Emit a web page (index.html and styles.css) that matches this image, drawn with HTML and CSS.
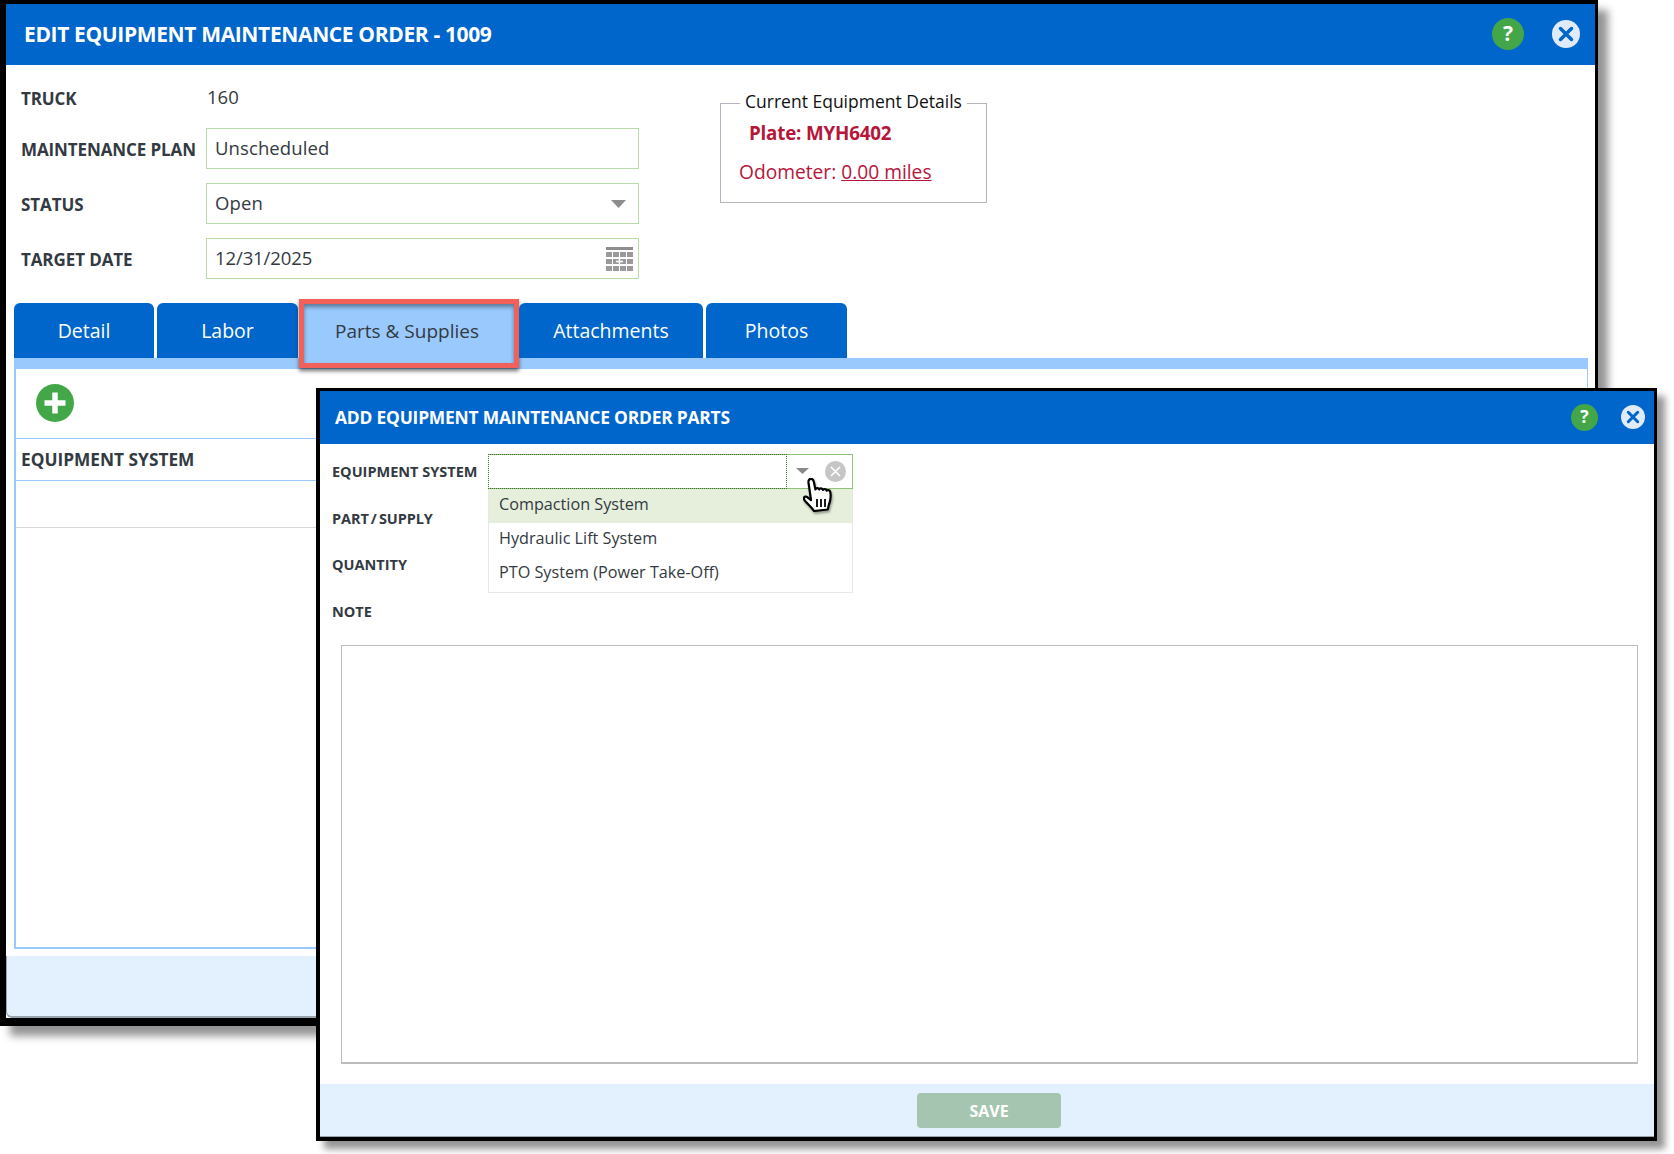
FILE: index.html
```html
<!DOCTYPE html>
<html lang="en">
<head>
<meta charset="utf-8">
<title>Edit Equipment Maintenance Order</title>
<link rel="stylesheet" href="styles.css">
</head>
<body>
<section class="window main-window">
  <header class="titlebar main-titlebar">
    <h1 class="title main-title">EDIT EQUIPMENT MAINTENANCE ORDER - 1009</h1>
    <div class="title-actions main-actions">
      <svg class="icon help-lg" viewBox="0 0 32 32"><circle cx="16" cy="16" r="16" fill="#43a648"/><text x="16" y="23" text-anchor="middle" class="help-glyph">?</text></svg>
      <svg class="icon close-lg" viewBox="0 0 28 28"><circle cx="14" cy="14" r="14" fill="#dfebfa"/><path d="M8.500 8.500l11 11M19.500 8.500l-11 11" stroke="#0066cc" stroke-width="3.500" stroke-linecap="round"/></svg>
    </div>
  </header>
  <div class="top-area">
    <div class="form-grid">
      <div class="f-label truck-label">TRUCK</div><div class="f-value">160</div>
      <div class="f-label">MAINTENANCE PLAN</div><div class="f-input">Unscheduled</div>
      <div class="f-label">STATUS</div>
      <div class="f-input">Open<svg class="status-arrow" viewBox="0 0 15 8"><path d="M0 0h15l-7.500 8z" fill="#8d8d8d"/></svg></div>
      <div class="f-label">TARGET DATE</div>
      <div class="f-input f-date">12/31/2025
        <svg class="calendar" viewBox="0 0 27 25">
          <rect width="27" height="3" fill="#8e8e8e"/>
          <g fill="#9a9a9a">
            <rect x="0" y="5" width="6" height="5"/><rect x="7" y="5" width="6" height="5"/><rect x="14" y="5" width="6" height="5"/><rect x="21" y="5" width="6" height="5"/>
            <rect x="0" y="12" width="6" height="5"/><rect x="7" y="12" width="6" height="5"/><rect x="14" y="12" width="6" height="5"/><rect x="21" y="12" width="6" height="5"/>
            <rect x="0" y="19" width="6" height="5"/><rect x="7" y="19" width="6" height="5"/><rect x="14" y="19" width="6" height="5"/><rect x="21" y="19" width="6" height="5"/>
          </g>
          <path d="M13.500 11v7M10 14.500h7" stroke="#fff" stroke-width="1.500"/>
        </svg>
      </div>
    </div>
    <fieldset class="details">
      <legend class="details-legend">Current Equipment Details</legend>
      <div class="plate">Plate: MYH6402</div>
      <div class="odometer">Odometer: <a class="odometer-link">0.00 miles</a></div>
    </fieldset>
  </div>
  <nav class="tabs">
    <div class="tab tab-detail">Detail</div>
    <div class="tab tab-labor">Labor</div>
    <div class="tab tab-parts">Parts &amp; Supplies<span class="callout"></span></div>
    <div class="tab tab-attach">Attachments</div>
    <div class="tab tab-photos">Photos</div>
  </nav>
  <div class="tab-panel">
    <div class="panel-toolbar">
      <svg class="plus" viewBox="0 0 38 38"><circle cx="19" cy="19" r="19" fill="#43a648"/><path d="M19 8.500v21M8.500 19h21" stroke="#fff" stroke-width="5.500"/></svg>
    </div>
    <div class="panel-head">EQUIPMENT SYSTEM</div>
    <div class="panel-row"></div>
  </div>
  <footer class="main-footer"></footer>
</section>

<section class="window modal-window">
  <header class="titlebar modal-titlebar">
    <h2 class="title modal-title">ADD EQUIPMENT MAINTENANCE ORDER PARTS</h2>
    <div class="title-actions modal-actions">
      <svg class="icon help-sm" viewBox="0 0 32 32"><circle cx="16" cy="16" r="16" fill="#43a648"/><text x="16" y="23" text-anchor="middle" class="help-glyph">?</text></svg>
      <svg class="icon close-sm" viewBox="0 0 28 28"><circle cx="14" cy="14" r="14" fill="#dfebfa"/><path d="M8.500 8.500l11 11M19.500 8.500l-11 11" stroke="#0066cc" stroke-width="3.500" stroke-linecap="round"/></svg>
    </div>
  </header>
  <div class="modal-body">
    <div class="modal-grid">
      <div class="m-label">EQUIPMENT SYSTEM</div>
      <div class="combo">
        <div class="combo-input"></div>
        <div class="combo-tools">
          <svg class="combo-arrow" viewBox="0 0 13 6"><path d="M0 0h13L6.500 6z" fill="#8a8a8a"/></svg>
          <svg class="combo-clear" viewBox="0 0 21 21"><circle cx="10.500" cy="10.500" r="10.500" fill="#c6c6c6"/><path d="M6 6l9 9M15 6l-9 9" stroke="#fff" stroke-width="1.600"/></svg>
        </div>
        <ul class="options">
          <li class="option option-active">Compaction System</li>
          <li class="option">Hydraulic Lift System</li>
          <li class="option">PTO System (Power Take-Off)</li>
        </ul>
        <svg class="hand" viewBox="0 0 32 34">
          <path d="M11 33c-2-3-5-6-8-9-1.500-1.500-2.500-3.500-2-4.500 .8-1.500 3-.8 4.200 .4L8 22 5.500 4.500C5.200 2 6.500 .8 8 .8s2.500 1.200 2.900 3.200l1.500 7.500c.3-1.800 3.200-2 3.800 0 .4-1.600 3.300-1.700 3.800 .4 .6-1.300 3.300-1.200 3.800 .8 .3-.8 3-1 3.500 1.300 .8 4.500 .4 8.500-1.500 13l-1 4.500z" fill="#fff" stroke="#000" stroke-width="2.200" stroke-linejoin="round"/>
          <path d="M14 21v8M18 21v8M22 21v8" stroke="#000" stroke-width="1.800"/>
        </svg>
      </div>
      <div class="m-label part-label">PART / SUPPLY</div><div></div>
      <div class="m-label">QUANTITY</div><div></div>
      <div class="m-label">NOTE</div><div></div>
    </div>
    <div class="note-box"></div>
  </div>
  <footer class="modal-footer"><button class="save">SAVE</button></footer>
</section>
</body>
</html>
```
FILE: styles.css
```css
* { box-sizing: border-box; }
html, body { margin: 0; padding: 0; background: #fff; }
body { width: 1674px; height: 1154px; position: relative; overflow: hidden; font-family: "Open Sans", "Noto Sans", sans-serif; color: #333a42; }

.window { position: absolute; display: flex; flex-direction: column; background: #fff; border-style: solid; border-color: #000; }
.main-window { left: 0; top: 0; width: 1598px; height: 1026px; border-width: 4px 3px 8px 6px; box-shadow: 10px 10px 8px rgba(0,0,0,.42); }
.modal-window { left: 316px; top: 388px; width: 1341px; height: 753px; border-width: 3px 3px 4px 4px; box-shadow: 8px 8px 7px rgba(0,0,0,.42); }

.titlebar { display: flex; align-items: center; justify-content: space-between; background: #0066cc; color: #fff; flex: none; }
.title { margin: 0; font-weight: 700; }
.main-titlebar { height: 61px; padding: 0 15px 0 18px; }
.main-title { font-size: 21px; letter-spacing: -.36px; margin-top: -2px; }
.modal-titlebar { height: 53px; padding: 0 9px 0 15px; }
.modal-title { font-size: 17.400px; letter-spacing: -.2px; margin-top: -1px; }
.title-actions { display: flex; align-items: center; margin-top: -1px; }
.main-actions { gap: 28px; }
.modal-actions { gap: 23px; }
.icon { display: block; flex: none; }
.help-lg { width: 32px; height: 32px; }
.close-lg { width: 28px; height: 28px; }
.help-sm { width: 27px; height: 27px; }
.close-sm { width: 24px; height: 24px; }
.help-glyph { font-family: "Open Sans", sans-serif; font-weight: 700; font-size: 21px; fill: #fff; }

.top-area { display: flex; align-items: flex-start; flex: none; height: 238px; padding: 12px 0 0 15px; }
.form-grid { display: grid; grid-template-columns: 185px 433px; grid-template-rows: 41px 41px 41px 41px; row-gap: 14px; width: 618px; margin-top: -4px; }
.f-label { align-self: center; font-size: 17px; font-weight: 700; letter-spacing: -.1px; padding-top: 2px; }
.truck-label { padding-top: 9px; }
.f-value { align-self: center; font-size: 18.500px; padding: 5px 0 0 1px; }
.f-input { position: relative; display: flex; align-items: center; height: 41px; padding: 0 8px 3px; border: 1px solid #b9dba6; font-size: 18.500px; letter-spacing: .1px; }
.f-date { letter-spacing: -.1px; }
.status-arrow { position: absolute; right: 12px; top: 16px; width: 15px; height: 8px; }
.calendar { position: absolute; right: 5px; top: 8px; width: 27px; height: 25px; }

.details { margin: 12px 0 0 81px; width: 267px; height: 114px; padding: 0; border: 1px solid #b4b4c0; flex: none; }
.details-legend { margin: 0 auto; padding: 0 5px 4px; font-size: 17.500px; line-height: 24px; color: #111; }
.plate { margin: 4px 0 0 28px; font-size: 18.800px; font-weight: 700; line-height: 24px; color: #b5163a; letter-spacing: -.2px; }
.odometer { margin: 15px 0 0 18px; font-size: 19.200px; line-height: 24px; color: #b5163a; }
.odometer-link { text-decoration: underline; }

.tabs { display: flex; flex: none; height: 55px; margin-left: 8px; }
.tab { position: relative; display: flex; align-items: center; justify-content: center; height: 55px; border-radius: 6px 6px 0 0; background: #0066cc; color: #fff; font-size: 19.500px; }
.tab-detail { width: 140px; }
.tab-labor { width: 141px; margin-left: 3px; }
.tab-parts { width: 216px; margin-left: 3px; padding-right: 4px; background: #99c9fd; color: #333a42; border-radius: 0; font-size: 19px; }
.tab-attach { width: 184px; margin-left: 2px; }
.tab-photos { width: 141px; margin-left: 3px; }
.callout { position: absolute; left: -2px; top: -4px; width: 220px; height: 69px; border: 5px solid #f2605a; box-shadow: 0 3px 4px rgba(0,0,0,.55), inset 0 3px 4px rgba(0,0,0,.4); }

.tab-panel { flex: none; margin: 0 7px 0 8px; height: 591px; border-style: solid; border-color: #99c9fd; border-width: 11px 1px 2px 2px; background: #fff; }
.panel-toolbar { height: 69px; display: flex; align-items: center; padding-left: 20px; }
.plus { width: 38px; height: 38px; display: block; margin-top: -1px; }
.panel-head { height: 43px; display: flex; align-items: center; padding-left: 5px; padding-bottom: 1px; border-top: 1px solid #99c9fd; border-bottom: 1px solid #99c9fd; font-size: 17.300px; font-weight: 700; }
.panel-row { height: 47px; border-bottom: 1px solid #d6d6d6; }
.main-footer { flex: none; height: 62px; margin-top: 7px; background: #e3f0fd; border-bottom: 2px solid #9aa4ac; border-left: 1px solid #9aa4ac; border-bottom-left-radius: 6px; }

.modal-body { position: relative; flex: 1; display: flex; flex-direction: column; padding: 10px 19px 0 0; }
.modal-grid { display: grid; grid-template-columns: 168px 365px; grid-template-rows: 35px 58px 34px 60px; align-items: center; }
.m-label { font-size: 14.500px; font-weight: 700; padding-left: 12px; }
.part-label { word-spacing: -1.500px; letter-spacing: -.1px; }
.combo { position: relative; display: flex; height: 35px; border: 1px solid #8fc378; border-left: 0; }
.combo-input { width: 299px; border: 1px dotted #3f6f2e; margin: -1px 0; }
.combo-tools { flex: 1; position: relative; }
.combo-arrow { position: absolute; left: 9px; top: 13px; width: 13px; height: 6px; }
.combo-clear { position: absolute; left: 38px; top: 6px; width: 21px; height: 21px; }
.options { position: absolute; left: 0; top: 34px; width: 365px; margin: 0; padding: 0; list-style: none; background: #fff; border: 1px solid #e8e8e8; border-top: 0; z-index: 2; }
.option { height: 34.200px; padding: 0 0 4px 10px; display: flex; align-items: center; font-size: 16.200px; }
.option-active { background: #e5efdc; }
.hand { position: absolute; left: 315px; top: 23px; width: 32px; height: 34px; z-index: 3; filter: drop-shadow(1px 2px 1px rgba(0,0,0,.35)); }
.note-box { margin: 4px 0 0 21px; height: 419px; width: 1297px; border: 1px solid #bcbcbc; border-bottom-width: 2px; }

.modal-footer { flex: none; height: 53px; display: flex; align-items: flex-start; padding: 9px 0 0 597px; background: #e3f0fd; border-bottom: 1px solid #9aa4ac; }
.save { width: 144px; height: 35px; border: 0; border-radius: 4px; background: #a6c5b0; color: #fff; font-family: inherit; font-size: 16px; font-weight: 700; }
```
